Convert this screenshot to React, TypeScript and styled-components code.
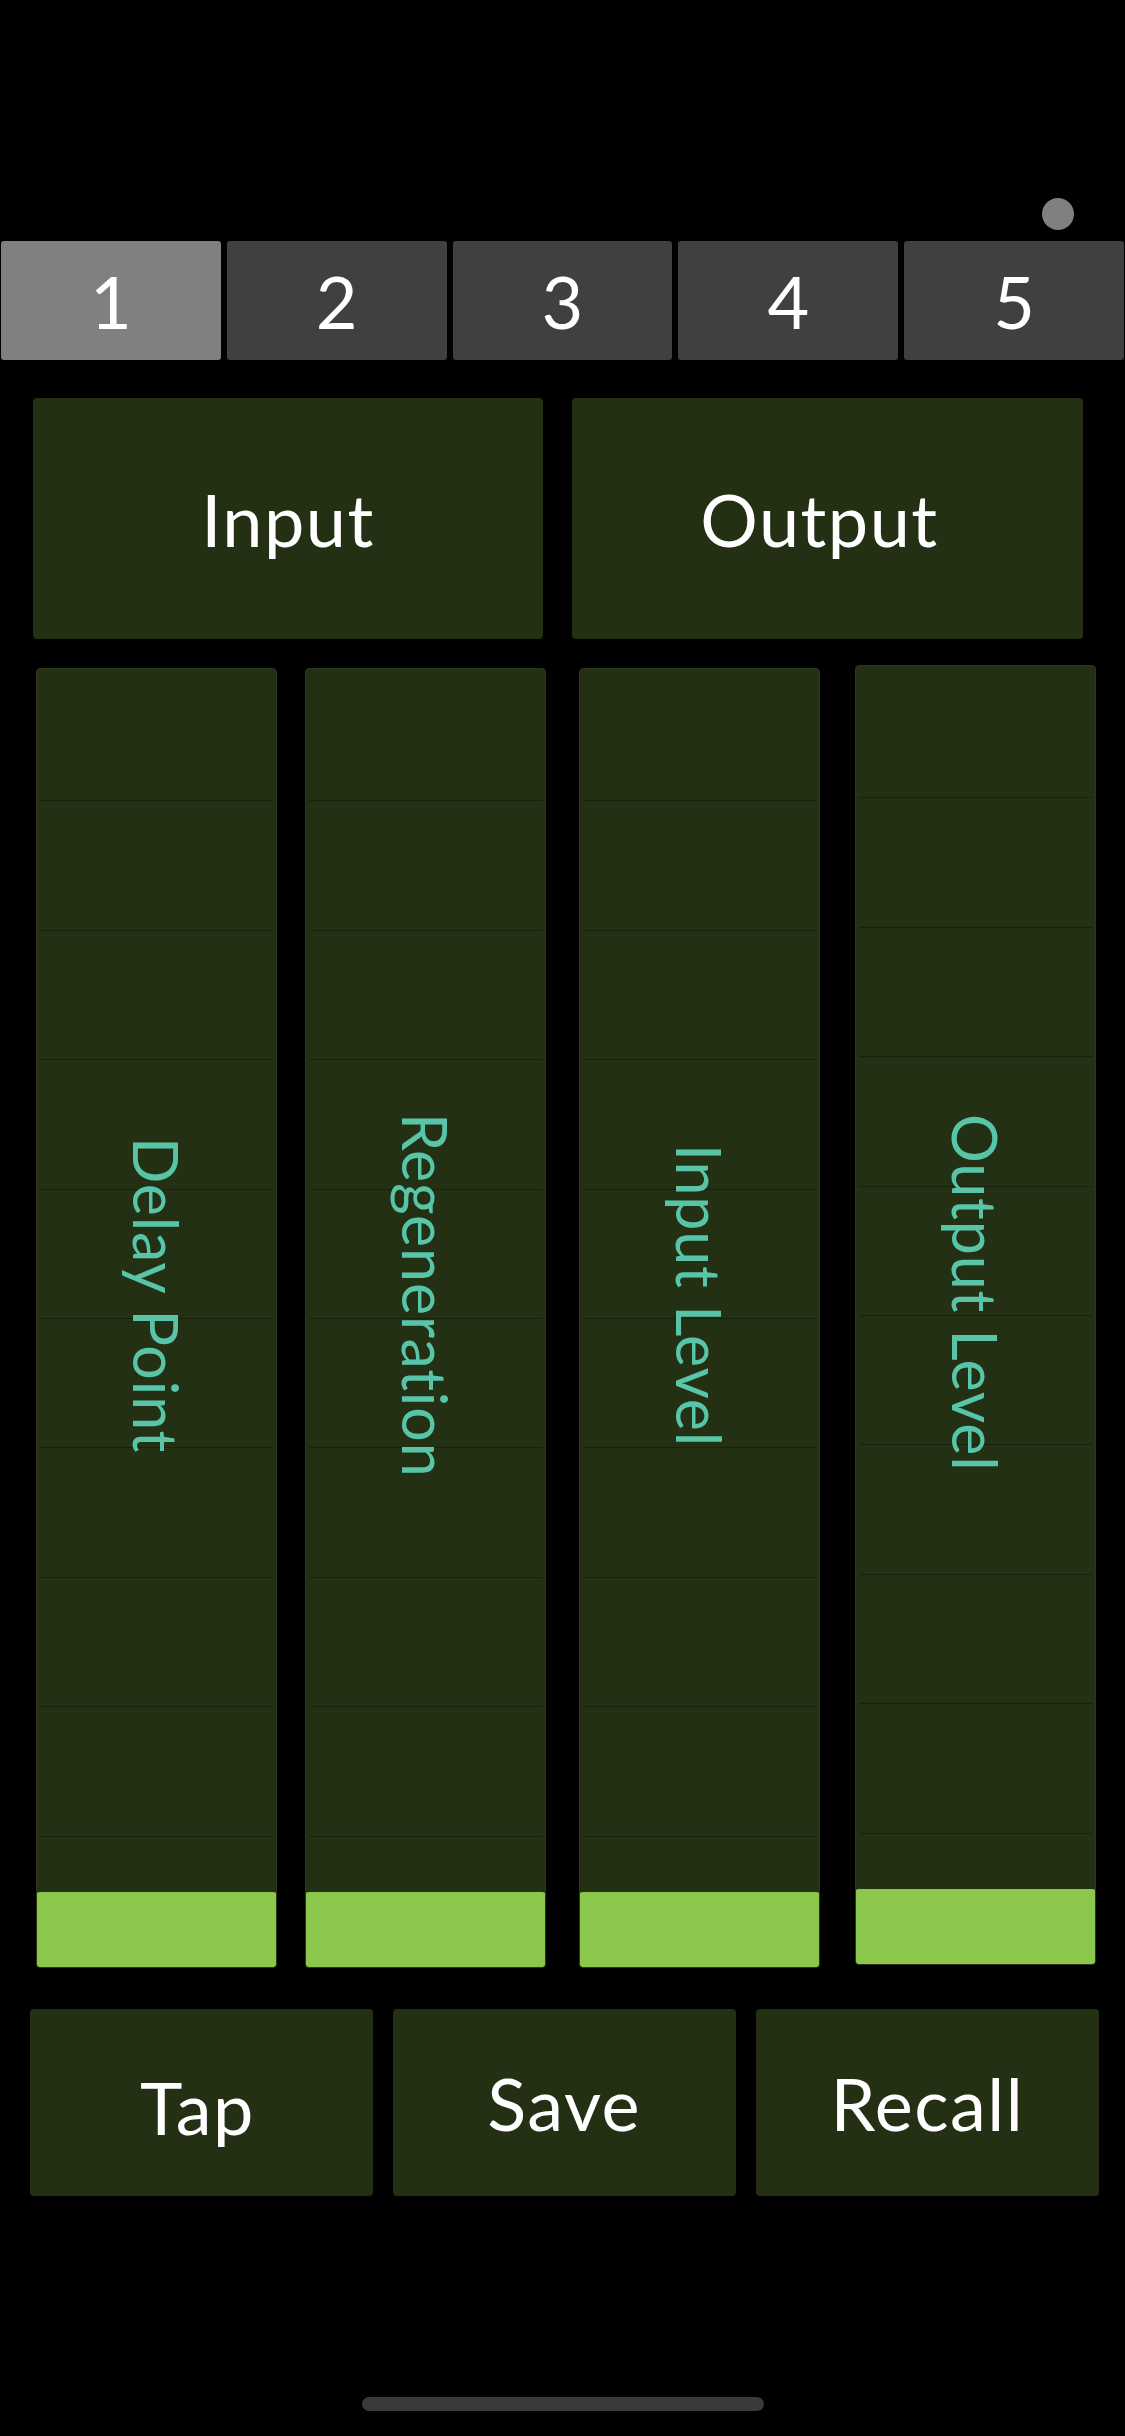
import React from "react";
import styled, { createGlobalStyle } from "styled-components";

const Global = createGlobalStyle`
  html, body {
    margin: 0;
    padding: 0;
    background: #000;
  }
  body {
    font-family: Lato, "Open Sans", "Noto Sans", sans-serif;
    -webkit-font-smoothing: antialiased;
  }
`;

const Page = styled.div`
  position: relative;
  width: 1125px;
  height: 2436px;
  box-sizing: border-box;
  padding-top: 241px;
  background: #000;
  overflow: hidden;
  display: flex;
  flex-direction: column;
`;

const StatusDot = styled.div`
  position: absolute;
  left: 1042px;
  top: 198px;
  width: 32px;
  height: 32px;
  border-radius: 50%;
  background: #808080;
`;

const TabBar = styled.div`
  display: flex;
  gap: 6px;
  padding: 0 1px;
  height: 119px;
`;

const Tab = styled.button<{ $active?: boolean }>`
  flex: 1;
  margin: 0;
  padding: 0;
  border: none;
  border-radius: 3px;
  background: ${(p) => (p.$active ? "#808080" : "#404040")};
  color: #fff;
  font-family: inherit;
  font-size: 72px;
  line-height: 1;
  display: flex;
  align-items: center;
  justify-content: center;
`;

const ModeRow = styled.div`
  display: grid;
  grid-template-columns: 510px 511px;
  column-gap: 29px;
  padding-left: 33px;
  margin-top: 38px;
  height: 241px;
`;

const Panel = styled.button<{ $dx?: number; $dy?: number }>`
  margin: 0;
  border: none;
  border-radius: 4px;
  background: #233013;
  color: #fff;
  font-family: inherit;
  font-size: 72px;
  letter-spacing: 1.5px;
  line-height: 1;
  display: flex;
  align-items: center;
  justify-content: center;
  padding: ${(p) => Math.max(0, p.$dy ?? 0)}px ${(p) => Math.max(0, -(p.$dx ?? 0))}px 0
    ${(p) => Math.max(0, p.$dx ?? 0)}px;
`;

const SliderRow = styled.div`
  display: flex;
  align-items: flex-start;
  padding-left: 36px;
  margin-top: 29px;
  height: 1300px;
`;

const Slider = styled.div<{ $lead: number; $shift: number }>`
  position: relative;
  flex: none;
  width: 241px;
  height: 1300px;
  margin-left: ${(p) => p.$lead}px;
  margin-top: ${(p) => p.$shift}px;
  box-sizing: border-box;
  padding: 2px 3px;
  border: 1px solid #29381a;
  border-radius: 4px;
  background: #233013;
  overflow: hidden;
  display: grid;
  grid-template-rows: repeat(10, 1fr);
`;

const Tick = styled.div`
  & + & {
    border-top: 1px solid #18210d;
  }
`;

const Fill = styled.div`
  position: absolute;
  left: -1px;
  right: -1px;
  bottom: -1px;
  border-radius: 4px;
  background: #8bc74a;
`;

const LabelLayer = styled.div`
  position: absolute;
  left: 0;
  right: 0;
  top: 0;
  bottom: 45px;
  display: flex;
  align-items: center;
  justify-content: center;
  pointer-events: none;
`;

const SliderLabel = styled.span`
  writing-mode: vertical-rl;
  color: #58c5a9;
  font-size: 61px;
  letter-spacing: 0.8px;
  line-height: normal;
  white-space: nowrap;
`;

const ActionRow = styled.div`
  display: grid;
  grid-template-columns: repeat(3, 343px);
  column-gap: 20.2px;
  padding-left: 29.5px;
  margin-top: 41px;
  height: 187px;
`;

const HomeBar = styled.div`
  width: 402px;
  height: 14px;
  border-radius: 7px;
  background: #3a3a3a;
  margin: 201px auto 0;
`;

const sliders = [
  { label: "Delay Point", lead: 0, shift: 0 },
  { label: "Regeneration", lead: 28, shift: 0 },
  { label: "Input Level", lead: 33, shift: 0 },
  { label: "Output Level", lead: 35, shift: -3 },
];

export default function App() {
  return (
    <>
      <Global />
      <Page>
        <StatusDot />
        <TabBar>
          {[1, 2, 3, 4, 5].map((n) => (
            <Tab key={n} $active={n === 1}>
              {n}
            </Tab>
          ))}
        </TabBar>
        <ModeRow>
          <Panel>Input</Panel>
          <Panel $dx={-16}>Output</Panel>
        </ModeRow>
        <SliderRow>
          {sliders.map((s) => (
            <Slider key={s.label} $lead={s.lead} $shift={s.shift}>
              {Array.from({ length: 10 }).map((_, i) => (
                <Tick key={i} />
              ))}
              <LabelLayer>
                <SliderLabel>{s.label}</SliderLabel>
              </LabelLayer>
              <Fill style={{ height: 76 }} />
            </Slider>
          ))}
        </SliderRow>
        <ActionRow>
          <Panel $dx={-7} $dy={8}>Tap</Panel>
          <Panel>Save</Panel>
          <Panel>Recall</Panel>
        </ActionRow>
        <HomeBar />
      </Page>
    </>
  );
}
